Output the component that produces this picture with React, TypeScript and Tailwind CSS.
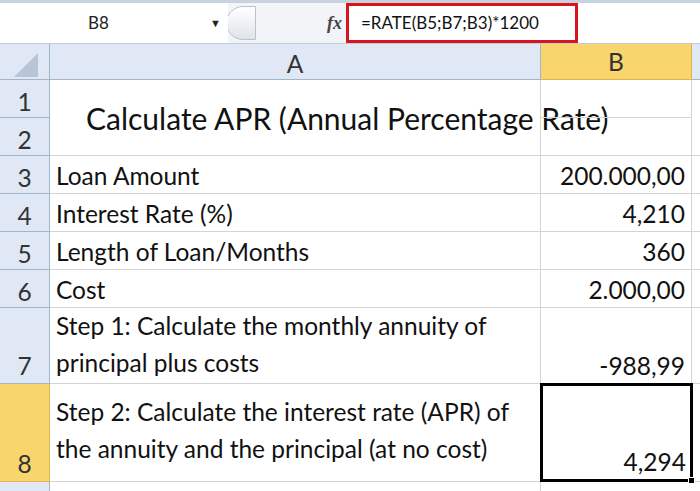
export default function App() {
  const rows: { n: string; h: number; a: string; b: string; sel?: boolean }[] = [
    { n: "3", h: 38, a: "Loan Amount", b: "200.000,00" },
    { n: "4", h: 38, a: "Interest Rate (%)", b: "4,210" },
    { n: "5", h: 38, a: "Length of Loan/Months", b: "360" },
    { n: "6", h: 38, a: "Cost", b: "2.000,00" },
  ];
  const hdr = "bg-[#dfe8f4] text-[#333] border-r border-b border-[#9eb6ce] flex items-end justify-center";
  return (
    <div className="w-[700px] h-[491px] overflow-hidden bg-white text-[24.5px] leading-[30px] text-[#111] whitespace-nowrap" style={{ fontFamily: "Lato, 'Open Sans', sans-serif" }}>
      <div className="h-[44px] flex items-center bg-[#f2f4f7] border-t-[3px] border-[#c9d3df] border-b border-b-[#c3cbd6]">
        <div className="w-[228px] h-full bg-white flex items-center text-[17px] text-[#222] relative">
          <span className="ml-[88px]">B8</span>
          <span className="absolute left-[210px] text-[11px]">▼</span>
        </div>
        <div className="w-[30px] h-[34px] rounded-l-full border border-[#b8c2cf] bg-gradient-to-b from-white to-[#dfe4ea] -ml-[2px]" />
        <div className="w-[90px] flex justify-end pr-[4px] italic font-bold text-[18px] text-[#444]" style={{ fontFamily: "'Liberation Serif', serif" }}>fx</div>
        <div className="w-[232px] h-[40px] border-[3px] border-[#d9141d] bg-white flex items-center pl-[12px] text-[17px] text-[#111]">=RATE(B5;B7;B3)*1200</div>
        <div className="flex-1 h-full bg-white" />
      </div>
      <div className="flex">
        <div className={hdr + " w-[50px] h-[36px] items-center"}>
          <svg width="30" height="30" viewBox="0 0 30 30"><polygon points="28,4 28,28 4,28" fill="#b7c5d6" /></svg>
        </div>
        <div className={hdr + " w-[491px] h-[36px] items-center"}>A</div>
        <div className="w-[151px] h-[36px] bg-[#f9d56e] border-r border-b border-[#e3b24a] flex items-center justify-center text-[#333]">B</div>
        <div className="flex-1 h-[36px] bg-[#dfe8f4] border-b border-[#9eb6ce]" />
      </div>
      <div className="flex">
        <div className="flex flex-col">
          <div className={hdr + " w-[50px] h-[38px] items-center"}>1</div>
          <div className={hdr + " w-[50px] h-[38px] items-center"}>2</div>
        </div>
        <div className="w-[491px] h-[76px] border-r border-b border-[#d4d4d4] flex items-center pl-[36px] text-[30px]">Calculate APR (Annual Percentage Rate)</div>
        <div className="w-[151px] flex flex-col">
          <div className="h-[38px] border-r border-b border-[#d4d4d4]" />
          <div className="h-[38px] border-r border-b border-[#d4d4d4]" />
        </div>
        <div className="flex-1 border-b border-[#d4d4d4]" />
      </div>
      {rows.map((r) => (
        <div key={r.n} className="flex" style={{ height: r.h }}>
          <div className={hdr + " w-[50px] items-center"}>{r.n}</div>
          <div className="w-[491px] border-r border-b border-[#d4d4d4] flex items-end pb-[2px] pl-[6px]">{r.a}</div>
          <div className="w-[151px] border-r border-b border-[#d4d4d4] flex items-end justify-end pb-[2px] pr-[6px]">{r.b}</div>
          <div className="flex-1 border-b border-[#d4d4d4]" />
        </div>
      ))}
      <div className="flex h-[76px]">
        <div className={hdr + " w-[50px] pb-[2px]"}>7</div>
        <div className="w-[491px] border-r border-b border-[#d4d4d4] flex items-end pb-[2px] pl-[6px] leading-[37px]">Step 1: Calculate the monthly annuity of<br />principal plus costs</div>
        <div className="w-[151px] border-r border-b border-[#d4d4d4] flex items-end justify-end pb-[2px] pr-[6px]">-988,99</div>
        <div className="flex-1 border-b border-[#d4d4d4]" />
      </div>
      <div className="flex h-[98px]">
        <div className="w-[50px] bg-[#f9d56e] border-r border-b border-[#e3b24a] flex items-end justify-center pb-[2px] text-[#333]">8</div>
        <div className="w-[491px] border-r border-b border-[#d4d4d4] flex items-end pb-[14px] pl-[6px] leading-[37px]">Step 2: Calculate the interest rate (APR) of<br />the annuity and the principal (at no cost)</div>
        <div className="w-[153px] -ml-[1px] -mt-[1px] border-[3px] border-black flex items-end justify-end pb-[2px] pr-[4px] relative">
          4,294
          <div className="absolute -right-[5px] -bottom-[5px] w-[7px] h-[7px] bg-black border border-white" />
        </div>
        <div className="flex-1 border-b border-[#d4d4d4]" />
      </div>
      <div className="flex h-[20px]">
        <div className="w-[50px] bg-[#dfe8f4] border-r border-[#9eb6ce]" />
        <div className="w-[491px] border-r border-[#d4d4d4]" />
      </div>
    </div>
  );
}
